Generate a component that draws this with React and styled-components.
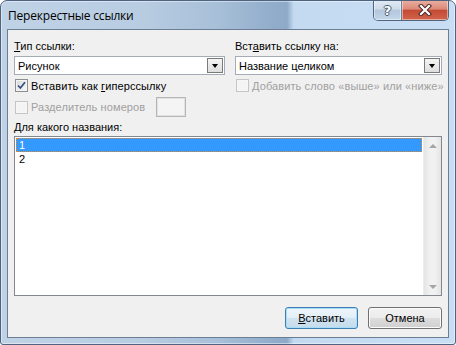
import React from "react";
import styled, { createGlobalStyle } from "styled-components";

const GlobalStyle = createGlobalStyle`
  html, body {
    margin: 0;
    padding: 0;
    background: #ffffff;
  }
  body {
    font-family: "Liberation Sans", Arial, sans-serif;
  }
`;

const Window = styled.div`
  box-sizing: border-box;
  width: 456px;
  height: 345px;
  display: flex;
  flex-direction: column;
  border: 1px solid #4d6380;
  border-radius: 7px 7px 3px 3px;
  overflow: hidden;
  background: linear-gradient(
    90deg,
    #bfd2e6 0%,
    #b9cde2 30%,
    #a7bfd8 48%,
    #91adcb 60%,
    #8eaac9 63%,
    #c3daf1 64.5%,
    #c8def4 100%
  );
  box-shadow: inset 0 0 0 1px rgba(255, 255, 255, 0.45);
`;

const TitleBar = styled.div`
  height: 28px;
  display: flex;
  align-items: flex-start;
  padding-left: 7px;
`;

const Title = styled.div`
  margin-top: 6px;
  font-family: "Open Sans", "Noto Sans", sans-serif;
  font-size: 12px;
  line-height: 17px;
  color: #000;
  letter-spacing: -0.2px;
`;

const CaptionGroup = styled.div`
  display: flex;
  margin-left: auto;
  margin-right: 6px;
  margin-top: -1px;
  height: 20px;
  border: 1px solid #52657e;
  border-top: none;
  border-radius: 0 0 5px 5px;
  overflow: hidden;
`;

const CaptionButton = styled.div`
  width: ${(p) => (p.$close ? "46px" : "27px")};
  display: flex;
  align-items: center;
  justify-content: center;
  background: ${(p) =>
    p.$close
      ? "linear-gradient(#eab0a4 0%, #dc8a78 45%, #c44a35 52%, #d2654c 100%)"
      : "linear-gradient(#e2ebf5 0%, #cddbea 45%, #b3c6db 52%, #c4d6e9 100%)"};
  border-right: ${(p) => (p.$close ? "none" : "1px solid #6f8198")};
  box-shadow: inset 0 0 0 1px rgba(255, 255, 255, 0.45);
`;

const HelpGlyph = styled.span`
  font-family: "DejaVu Sans", sans-serif;
  font-weight: bold;
  font-size: 13px;
  line-height: 13px;
  color: #fff;
  text-shadow: -1px 0 #4b5a6d, 1px 0 #4b5a6d, 0 -1px #4b5a6d, 0 1px #4b5a6d;
`;

const Client = styled.div`
  flex: 1;
  display: flex;
  flex-direction: column;
  margin: 0 6px 6px 6px;
  padding: 10px 6px 8px 6px;
  border: 1px solid #6c7e94;
  background: #f0f0f0;
  font-size: 11px;
  color: #000;
`;

const TopGrid = styled.div`
  display: grid;
  grid-template-columns: 211px 207px;
  column-gap: 10px;
`;

const Column = styled.div`
  display: flex;
  flex-direction: column;
`;

const Label = styled.div`
  line-height: 13px;
  height: 13px;
  white-space: nowrap;
  margin-top: ${(p) => p.$mt || 0}px;
`;

const Key = styled.span`
  text-decoration: underline;
`;

const Combo = styled.div`
  box-sizing: border-box;
  margin-top: 3px;
  height: 19px;
  display: flex;
  align-items: stretch;
  border: 1px solid #a5acb5;
  background: #fff;
`;

const ComboText = styled.div`
  flex: 1;
  padding-left: 3px;
  display: flex;
  align-items: center;
`;

const ComboButton = styled.div`
  box-sizing: border-box;
  width: 16px;
  margin: 1px;
  display: flex;
  align-items: center;
  justify-content: center;
  border: 1px solid #7a7a7a;
  background: linear-gradient(#f4f4f4, #dedede);
`;

const ArrowDown = styled.span`
  width: 0;
  height: 0;
  border-left: 3px solid transparent;
  border-right: 3px solid transparent;
  border-top: 4px solid #000;
`;

const CheckRow = styled.div`
  display: flex;
  align-items: center;
  height: ${(p) => p.$h || 15}px;
  margin-top: ${(p) => p.$mt || 0}px;
  padding-left: 1px;
  color: ${(p) => (p.$disabled ? "#a0a0a0" : "#000")};
  white-space: nowrap;
`;

const CheckBox = styled.span`
  box-sizing: border-box;
  width: 13px;
  height: 13px;
  margin-right: 3px;
  flex-shrink: 0;
  display: flex;
  align-items: center;
  justify-content: center;
  border: 1px solid ${(p) => (p.$disabled ? "#c5c5c5" : "#8e8f8f")};
  background: ${(p) =>
    p.$disabled ? "#f4f4f4" : "linear-gradient(135deg, #d5d8dc, #fafafa)"};
  box-shadow: inset 0 0 0 1px ${(p) => (p.$disabled ? "#f7f7f7" : "#f4f4f4")};
`;

const CheckText = styled.span`
  letter-spacing: 0.1px;
`;

const SmallField = styled.div`
  box-sizing: border-box;
  width: 30px;
  height: 20px;
  margin-left: 11px;
  border: 1px solid #b5b5b5;
  box-shadow: inset 0 0 0 1px #e2e2e2;
  background: #f4f4f4;
`;

const ListBox = styled.div`
  flex: 1;
  margin-top: 2px;
  display: flex;
  border: 1px solid #828790;
  background: #fff;
`;

const Items = styled.div`
  flex: 1;
  padding: 1px;
`;

const Item = styled.div`
  box-sizing: border-box;
  height: 14px;
  line-height: 12px;
  padding-left: 2px;
  color: ${(p) => (p.$selected ? "#fff" : "#000")};
  background: ${(p) => (p.$selected ? "#3399ff" : "transparent")};
  border: 1px ${(p) => (p.$selected ? "dotted #e08a2e" : "solid transparent")};
`;

const ScrollBar = styled.div`
  width: 17px;
  display: flex;
  flex-direction: column;
  justify-content: space-between;
  background: linear-gradient(90deg, #e4e4e4, #f1f1f1 35%, #f1f1f1 65%, #e4e4e4);
  border-left: 1px solid #ececec;
`;

const ScrollArrow = styled.div`
  height: 17px;
  display: flex;
  align-items: center;
  justify-content: center;
`;

const Tri = styled.span`
  width: 0;
  height: 0;
  border-left: 4px solid transparent;
  border-right: 4px solid transparent;
  ${(p) => (p.$up ? "border-bottom" : "border-top")}: 4px solid #a6a6a6;
`;

const ButtonRow = styled.div`
  display: flex;
  justify-content: flex-end;
  gap: 10px;
  margin-top: 11px;
`;

const Button = styled.button`
  box-sizing: border-box;
  width: ${(p) => p.$w || 73}px;
  height: 22px;
  padding: 0;
  font-family: "Liberation Sans", Arial, sans-serif;
  font-size: 11px;
  color: #000;
  border-radius: 3px;
  border: 1px solid ${(p) => (p.$default ? "#3c7fb1" : "#707070")};
  background: ${(p) =>
    p.$default
      ? "linear-gradient(#eef5fa 0%, #e2eef6 50%, #d0e3f0 51%, #c6dcec 100%)"
      : "linear-gradient(#f2f2f2 0%, #ebebeb 50%, #dddddd 51%, #cfcfcf 100%)"};
  box-shadow: inset 0 0 0 1px ${(p) => (p.$default ? "#a9dcf7" : "#fbfbfb")};
`;

const CheckMark = () => (
  <svg width="9" height="9" viewBox="0 0 9 9">
    <path d="M1 4.5 L3.4 7 L8 1.2" fill="none" stroke="#3a4f80" strokeWidth="1.7" />
  </svg>
);

const CloseGlyph = () => (
  <svg width="14" height="12" viewBox="0 0 14 12">
    <path d="M3 2 L11 10 M11 2 L3 10" stroke="#4a2a26" strokeWidth="4.2" strokeLinecap="square" />
    <path d="M3 2 L11 10 M11 2 L3 10" stroke="#ffffff" strokeWidth="2.2" strokeLinecap="square" />
  </svg>
);

const App = () => {
  return (
    <>
      <GlobalStyle />
      <Window>
        <TitleBar>
          <Title>Перекрестные ссылки</Title>
          <CaptionGroup>
            <CaptionButton>
              <HelpGlyph>?</HelpGlyph>
            </CaptionButton>
            <CaptionButton $close>
              <CloseGlyph />
            </CaptionButton>
          </CaptionGroup>
        </TitleBar>
        <Client>
          <TopGrid>
            <Column>
              <Label>
                <Key>Т</Key>ип ссылки:
              </Label>
              <Combo>
                <ComboText>Рисунок</ComboText>
                <ComboButton>
                  <ArrowDown />
                </ComboButton>
              </Combo>
              <CheckRow $mt={3}>
                <CheckBox>
                  <CheckMark />
                </CheckBox>
                <CheckText>
                  Вставить как <Key>г</Key>иперссылку
                </CheckText>
              </CheckRow>
              <CheckRow $mt={4} $h={20} $disabled>
                <CheckBox $disabled />
                <CheckText>Разделитель номеров</CheckText>
                <SmallField />
              </CheckRow>
            </Column>
            <Column>
              <Label>
                Вст<Key>а</Key>вить ссылку на:
              </Label>
              <Combo>
                <ComboText>Название целиком</ComboText>
                <ComboButton>
                  <ArrowDown />
                </ComboButton>
              </Combo>
              <CheckRow $mt={3} $disabled>
                <CheckBox $disabled />
                <CheckText>Добавить слово «выше» или «ниже»</CheckText>
              </CheckRow>
            </Column>
          </TopGrid>
          <Label $mt={4}>
            <Key>Д</Key>ля какого названия:
          </Label>
          <ListBox>
            <Items>
              <Item $selected>1</Item>
              <Item>2</Item>
            </Items>
            <ScrollBar>
              <ScrollArrow>
                <Tri $up />
              </ScrollArrow>
              <ScrollArrow>
                <Tri />
              </ScrollArrow>
            </ScrollBar>
          </ListBox>
          <ButtonRow>
            <Button $default $w={73}>
              <Key>В</Key>ставить
            </Button>
            <Button $w={74}>Отмена</Button>
          </ButtonRow>
        </Client>
      </Window>
    </>
  );
};

export default App;
